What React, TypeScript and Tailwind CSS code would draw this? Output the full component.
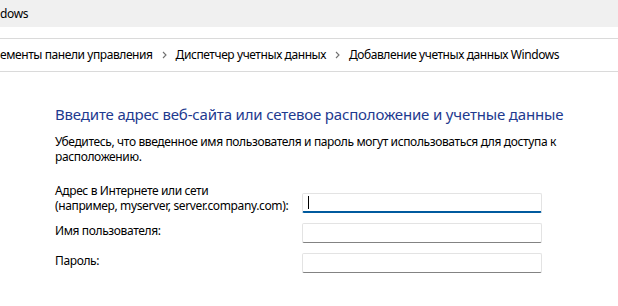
const Chevron = () => (
  <svg width="5" height="8" viewBox="0 0 5 8" className="shrink-0">
    <path d="M1 1l3 3-3 3" fill="none" stroke="#707070" strokeWidth="1.1" />
  </svg>
);

const Field = ({ focused = false }: { focused?: boolean }) => (
  <div
    className={
      focused
        ? 'relative h-[20px] w-[240px] rounded-[2px] border border-[#e3e3e3] border-b-2 border-b-[#005a9e] bg-white'
        : 'h-[20px] w-[240px] rounded-[2px] border border-[#e3e3e3] border-b-[#838383] bg-white'
    }
  >
    {focused && <div className="absolute left-[5px] top-[2px] h-[13px] w-px bg-black" />}
  </div>
);

export default function App() {
  return (
    <div
      className="h-[306px] w-[618px] overflow-hidden bg-white text-[12px] tracking-[-0.37px] text-black"
      style={{ fontFamily: '"Noto Sans", "Open Sans", sans-serif' }}
    >
      {/* window title */}
      <div className="flex h-[27px] items-center bg-[#f0f0f0] leading-none">
        <span>dows</span>
      </div>

      {/* breadcrumb */}
      <div className="mt-[11px] flex h-[34px] items-center gap-[9px] border-y border-[#dadada] whitespace-nowrap tracking-[-0.42px]">
        <span>ементы панели управления</span>
        <Chevron />
        <span>Диспетчер учетных данных</span>
        <Chevron />
        <span>Добавление учетных данных Windows</span>
      </div>

      <div className="pl-[55px]">
        <h1 className="mt-[32px] text-[15px] leading-[20px] tracking-[-0.17px] text-[#1e3a8f] whitespace-nowrap">
          Введите адрес веб-сайта или сетевое расположение и учетные данные
        </h1>
        <p className="mt-[10px] leading-[15px] whitespace-nowrap">
          Убедитесь, что введенное имя пользователя и пароль могут использоваться для доступа к
          <br />
          расположению.
        </p>

        <div className="mt-[19px] flex flex-col gap-[10px]">
          <div className="flex items-end">
            <label className="w-[247px] leading-[15px] whitespace-nowrap">
              Адрес в Интернете или сети
              <br />
              (например, myserver, server.company.com):
            </label>
            <Field focused />
          </div>
          <div className="flex items-start">
            <label className="w-[247px] leading-[15px]">Имя пользователя:</label>
            <Field />
          </div>
          <div className="flex items-start">
            <label className="w-[247px] leading-[15px]">Пароль:</label>
            <Field />
          </div>
        </div>
      </div>
    </div>
  );
}
